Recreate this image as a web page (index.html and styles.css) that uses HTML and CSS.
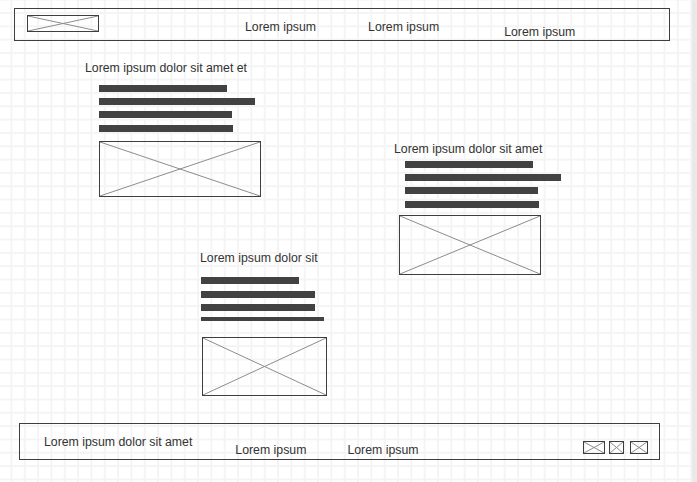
FILE: index.html
```html
<!DOCTYPE html>
<html lang="en">
<head>
    <meta charset="UTF-8">
    <title>Wireframe</title>
    <link rel="stylesheet" href="styles.css">
</head>
<body>
    <div class="pagina">
        <div class="topo">
            <svg class="ph logo" viewBox="0 0 100 100" preserveAspectRatio="none"><line x1="0" y1="0" x2="100" y2="100"/><line x1="100" y1="0" x2="0" y2="100"/></svg>
            <span class="nav n1">Lorem ipsum</span>
            <span class="nav n2">Lorem ipsum</span>
            <span class="nav n3">Lorem ipsum</span>
        </div>

        <div class="meio">
            <div class="coluna">
                <div class="card c1">
                    <p class="titulo">Lorem ipsum dolor sit amet et</p>
                    <div class="linhas">
                        <div class="barra"></div>
                        <div class="barra"></div>
                        <div class="barra"></div>
                        <div class="barra"></div>
                    </div>
                    <svg class="ph foto" viewBox="0 0 100 100" preserveAspectRatio="none"><line x1="0" y1="0" x2="100" y2="100"/><line x1="100" y1="0" x2="0" y2="100"/></svg>
                </div>
                <div class="card c3">
                    <p class="titulo">Lorem ipsum dolor sit</p>
                    <div class="linhas">
                        <div class="barra"></div>
                        <div class="barra"></div>
                        <div class="barra"></div>
                        <div class="barra"></div>
                    </div>
                    <svg class="ph foto" viewBox="0 0 100 100" preserveAspectRatio="none"><line x1="0" y1="0" x2="100" y2="100"/><line x1="100" y1="0" x2="0" y2="100"/></svg>
                </div>
            </div>
            <div class="card c2">
                <p class="titulo">Lorem ipsum dolor sit amet</p>
                <div class="linhas">
                    <div class="barra"></div>
                    <div class="barra"></div>
                    <div class="barra"></div>
                    <div class="barra"></div>
                </div>
                <svg class="ph foto" viewBox="0 0 100 100" preserveAspectRatio="none"><line x1="0" y1="0" x2="100" y2="100"/><line x1="100" y1="0" x2="0" y2="100"/></svg>
            </div>
        </div>

        <div class="rodape">
            <span class="nav f1">Lorem ipsum dolor sit amet</span>
            <span class="nav f2">Lorem ipsum</span>
            <span class="nav f3">Lorem ipsum</span>
            <div class="icones">
                <svg class="ph i1" viewBox="0 0 100 100" preserveAspectRatio="none"><line x1="0" y1="0" x2="100" y2="100"/><line x1="100" y1="0" x2="0" y2="100"/></svg>
                <svg class="ph i2" viewBox="0 0 100 100" preserveAspectRatio="none"><line x1="0" y1="0" x2="100" y2="100"/><line x1="100" y1="0" x2="0" y2="100"/></svg>
                <svg class="ph i3" viewBox="0 0 100 100" preserveAspectRatio="none"><line x1="0" y1="0" x2="100" y2="100"/><line x1="100" y1="0" x2="0" y2="100"/></svg>
            </div>
        </div>
    </div>
</body>
</html>
```

FILE: styles.css
```css
body{
    margin: 0;
    font-family: "Liberation Sans", Arial, sans-serif;
    font-size: 12.3px;
    color: #333;
}
.pagina{
    width: 692px;
    height: 482px;
    border-right: 5px solid #e9e9e9;
    display: flex;
    flex-direction: column;
    background-color: #fff;
    background-image:
        linear-gradient(to right, #f4f4f4 2px, transparent 2px),
        linear-gradient(to bottom, #f4f4f4 2px, transparent 2px);
    background-size: 13.333px 13.333px;
    background-position: 10.5px 12px;
}

/* caixas com X */
.ph{
    display: block;
    box-sizing: border-box;
    border: 1px solid #3e3e3e;
    flex: none;
}
.ph line{
    stroke: #8c8c8c;
    stroke-width: 1;
    vector-effect: non-scaling-stroke;
}

.nav{
    line-height: 14px;
    white-space: nowrap;
}

/* topo */
.topo{
    box-sizing: border-box;
    width: 656px;
    height: 33px;
    margin: 8px 0 0 14px;
    border: 1px solid #3e3e3e;
    display: flex;
    align-items: flex-start;
    padding-left: 12px;
}
.logo{
    width: 72px;
    height: 17px;
    margin-top: 6px;
}
.n1{ margin: 11px 0 0 146px; }
.n2{ margin: 11px 0 0 52px; }
.n3{ margin: 16px 0 0 65px; }

/* meio */
.meio{
    flex: 1;
    min-height: 0;
    display: flex;
    align-items: flex-start;
}
.coluna{
    margin: 20px 0 0 85px;
    display: flex;
    flex-direction: column;
    align-items: flex-start;
}
.titulo{
    margin: 0;
    line-height: 14px;
    white-space: nowrap;
}
.barra{
    height: 7px;
    background-color: #424242;
}
.barra + .barra{
    margin-top: 6px;
}

.c1 .linhas{ margin: 10px 0 0 14px; }
.c1 .barra:nth-child(1){ width: 128px; }
.c1 .barra:nth-child(2){ width: 156px; }
.c1 .barra:nth-child(3){ width: 133px; }
.c1 .barra:nth-child(4){ width: 134px; margin-top: 7px; }
.c1 .foto{ width: 162px; height: 56px; margin: 9px 0 0 14px; }

.c3{ margin: 54px 0 0 115px; }
.c3 .linhas{ margin: 12px 0 0 1px; }
.c3 .barra:nth-child(1){ width: 98px; }
.c3 .barra:nth-child(2){ width: 114px; margin-top: 7px; }
.c3 .barra:nth-child(3){ width: 114px; }
.c3 .barra:nth-child(4){ width: 123px; height: 4px; }
.c3 .foto{ width: 125px; height: 59px; margin: 16px 0 0 2px; }

.c2{ margin: 101px 0 0 67px; }
.c2 .linhas{ margin: 5px 0 0 11px; }
.c2 .barra:nth-child(1){ width: 128px; }
.c2 .barra:nth-child(2){ width: 156px; }
.c2 .barra:nth-child(3){ width: 133px; }
.c2 .barra:nth-child(4){ width: 134px; margin-top: 7px; }
.c2 .foto{ width: 142px; height: 60px; margin: 7px 0 0 5px; }

/* rodape */
.rodape{
    box-sizing: border-box;
    width: 641px;
    height: 37px;
    margin: 0 0 22px 19px;
    border: 1px solid #3e3e3e;
    display: flex;
    align-items: flex-start;
    padding-left: 24px;
}
.f1{ margin-top: 11px; }
.f2{ margin: 19px 0 0 43px; }
.f3{ margin: 19px 0 0 41px; }
.icones{
    display: flex;
    margin: 17px 11px 0 auto;
}
.i1{ width: 22px; height: 13px; }
.i2{ width: 15px; height: 13px; margin-left: 4px; }
.i3{ width: 18px; height: 13px; margin-left: 6px; }
```
